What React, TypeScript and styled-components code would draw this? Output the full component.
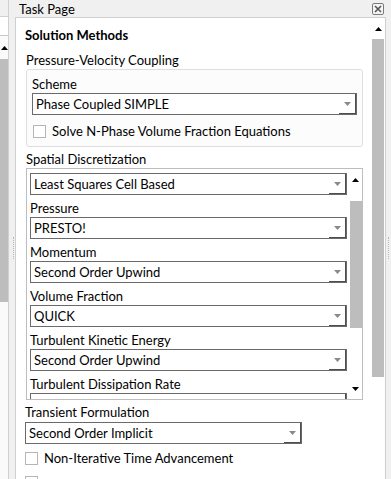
import React from "react";
import styled, { createGlobalStyle } from "styled-components";

const GlobalStyle = createGlobalStyle`
  html, body { margin: 0; padding: 0; background: #f0f0f0; }
  body { font-family: Lato, "Liberation Sans", sans-serif; font-size: 13px; color: #000; }
  * { box-sizing: border-box; }
`;

const Page = styled.div`
  width: 391px;
  height: 479px;
  display: flex;
  overflow: hidden;
  background: #f0f0f0;
`;

/* ---------- left, partially visible panel ---------- */
const LeftStrip = styled.div`
  width: 9px;
  padding-top: 16px;
  display: flex;
  flex-direction: column;
  border-right: 1px solid #d0d0d0;
`;
const LeftHeader = styled.div`
  height: 20px;
  background: #fff;
  border-top: 1px solid #d0d0d0;
  border-bottom: 1px solid #c8c8c8;
`;
const LeftTrack = styled.div`
  flex: 1;
  display: flex;
  flex-direction: column;
  background: #fafafa;
`;

/* ---------- splitters ---------- */
const Splitter = styled.div<{ $w: number; $pad: number }>`
  width: ${(p) => p.$w}px;
  padding-left: ${(p) => p.$pad}px;
  padding-top: 16px;
  display: flex;
  align-items: center;
`;
const Grip = styled.div`
  width: 1px;
  height: 22px;
  border-left: 1px dotted #b8b8b8;
`;

/* ---------- main task page ---------- */
const Main = styled.div`
  width: 371px;
  display: flex;
  flex-direction: column;
`;
const TitleBar = styled.div`
  height: 17px;
  display: flex;
  align-items: center;
  justify-content: space-between;
  padding: 0 2px 0 4px;
  line-height: 16px;
  flex: none;
`;
const Panel = styled.div`
  flex: 1;
  display: flex;
  background: #fff;
  border: 1px solid #cfcfcf;
  border-bottom: none;
  min-height: 0;
  overflow: hidden;
`;
const Content = styled.div`
  flex: 1;
  padding: 8px 9px 0 9px;
  display: flex;
  flex-direction: column;
  min-width: 0;
  & > * { flex: none; }
`;
const Heading = styled.div`
  font-weight: bold;
  line-height: 18px;
`;
const Label = styled.div<{ $mt?: number; $ml?: number }>`
  line-height: 18px;
  margin-top: ${(p) => p.$mt ?? 0}px;
  margin-left: ${(p) => p.$ml ?? 0}px;
  white-space: nowrap;
`;
const Group = styled.div`
  margin-left: 1px;
  width: 337px;
  border: 1px solid #dedede;
  border-radius: 3px;
  background: #fcfcfc;
  padding: 5px 5px 6px 5px;
`;

/* ---------- combo box ---------- */
const ComboBox = styled.div<{ $w?: number; $mt?: number }>`
  height: 22px;
  width: ${(p) => (p.$w ? `${p.$w}px` : "auto")};
  margin-top: ${(p) => p.$mt ?? 0}px;
  display: flex;
  background: #fff;
  border: 1px solid #6a6a6a;
`;
const ComboValue = styled.div`
  flex: 1;
  padding-left: 3px;
  line-height: 20px;
  white-space: nowrap;
  overflow: hidden;
`;
const ComboButton = styled.div`
  width: 17px;
  display: flex;
  align-items: center;
  justify-content: center;
  box-shadow: inset -1px -1px 0 #4e4e4e;
`;

/* ---------- check box ---------- */
const CheckRow = styled.div<{ $mt: number; $ml: number; $gap: number }>`
  display: flex;
  align-items: center;
  height: 18px;
  margin-top: ${(p) => p.$mt}px;
  margin-left: ${(p) => p.$ml}px;
  gap: ${(p) => p.$gap}px;
  white-space: nowrap;
`;
const CheckBox = styled.div`
  width: 13px;
  height: 13px;
  border: 1px solid #b5b5b5;
  background: #fff;
  flex: none;
`;

/* ---------- scrolled list box ---------- */
const ScrollBox = styled.div`
  margin-left: 1px;
  width: 337px;
  height: 232px;
  border: 1px solid #bdbdbd;
  display: flex;
  overflow: hidden;
`;
const ListArea = styled.div`
  flex: 1;
  padding: 4px 2px 0 3px;
  overflow: hidden;
  min-width: 0;
`;
const ListLabel = styled.div`
  padding-top: 4px;
  line-height: 18px;
  white-space: nowrap;
`;

/* ---------- scroll bars ---------- */
const VScroll = styled.div<{ $w: number; $mr?: number }>`
  width: ${(p) => p.$w}px;
  margin-right: ${(p) => p.$mr ?? 0}px;
  display: flex;
  flex-direction: column;
  background: #fff;
  flex: none;
`;
const ArrowBtn = styled.div<{ $h: number }>`
  height: ${(p) => p.$h}px;
  display: flex;
  align-items: center;
  justify-content: center;
  flex: none;
`;
const Track = styled.div<{ $pt?: number }>`
  flex: 1;
  padding-top: ${(p) => p.$pt ?? 0}px;
  min-height: 0;
`;
const Thumb = styled.div<{ $h: number; $ml?: number }>`
  height: ${(p) => p.$h}px;
  margin-left: ${(p) => p.$ml ?? 0}px;
  background: #bdbdbd;
  flex: none;
`;

const Tri = ({ down, color = "#000" }: { down?: boolean; color?: string }) => (
  <svg width="7" height="4" viewBox="0 0 7 4" style={{ display: "block" }}>
    <polygon points={down ? "0,0 7,0 3.5,4" : "0,4 7,4 3.5,0"} fill={color} />
  </svg>
);

const CloseIcon = () => (
  <svg width="12" height="12" viewBox="0 0 12 12" style={{ display: "block" }}>
    <rect x="0.5" y="0.5" width="11" height="11" rx="1.5" fill="#f4f4f4" stroke="#7a7a7a" />
    <path d="M3 3 L9 9 M9 3 L3 9" stroke="#555" strokeWidth="1.6" />
  </svg>
);

const Combo = ({ value, w, mt }: { value: string; w?: number; mt?: number }) => (
  <ComboBox $w={w} $mt={mt}>
    <ComboValue>{value}</ComboValue>
    <ComboButton>
      <Tri down color="#8a8a8a" />
    </ComboButton>
  </ComboBox>
);

const spatial: [string, string][] = [
  ["Pressure", "PRESTO!"],
  ["Momentum", "Second Order Upwind"],
  ["Volume Fraction", "QUICK"],
  ["Turbulent Kinetic Energy", "Second Order Upwind"],
  ["Turbulent Dissipation Rate", ""],
];

export default function App() {
  return (
    <Page>
      <GlobalStyle />
      <LeftStrip>
        <LeftHeader />
        <LeftTrack>
          <ArrowBtn $h={23}>
            <Tri />
          </ArrowBtn>
          <Thumb $h={243} />
        </LeftTrack>
      </LeftStrip>
      <Splitter $w={6} $pad={4}>
        <Grip />
      </Splitter>
      <Main>
        <TitleBar>
          <span>Task Page</span>
          <CloseIcon />
        </TitleBar>
        <Panel>
          <Content>
            <Heading>Solution Methods</Heading>
            <Label $mt={7} $ml={1}>Pressure-Velocity Coupling</Label>
            <Group>
              <Label>Scheme</Label>
              <Combo value="Phase Coupled SIMPLE" />
              <CheckRow $mt={7} $ml={1} $gap={6}>
                <CheckBox />
                <span>Solve N-Phase Volume Fraction Equations</span>
              </CheckRow>
            </Group>
            <Label $mt={3} $ml={1}>Spatial Discretization</Label>
            <ScrollBox>
              <ListArea>
                <Combo value="Least Squares Cell Based" />
                {spatial.map(([l, v]) => (
                  <React.Fragment key={l}>
                    <ListLabel>{l}</ListLabel>
                    <Combo value={v} />
                  </React.Fragment>
                ))}
              </ListArea>
              <VScroll $w={13}>
                <ArrowBtn $h={21}>
                  <Tri />
                </ArrowBtn>
                <Track $pt={11}>
                  <Thumb $h={127} $ml={1} />
                </Track>
                <ArrowBtn $h={20}>
                  <Tri down />
                </ArrowBtn>
              </VScroll>
            </ScrollBox>
            <Label $mt={3}>Transient Formulation</Label>
            <Combo value="Second Order Implicit" w={277} mt={1} />
            <CheckRow $mt={5} $ml={0} $gap={6}>
              <CheckBox />
              <span>Non-Iterative Time Advancement</span>
            </CheckRow>
            <CheckRow $mt={6} $ml={0} $gap={6}>
              <CheckBox />
            </CheckRow>
          </Content>
          <VScroll $w={12} $mr={1}>
            <ArrowBtn $h={21}>
              <Tri />
            </ArrowBtn>
            <Thumb $h={338} />
          </VScroll>
        </Panel>
      </Main>
      <Splitter $w={5} $pad={2}>
        <Grip />
      </Splitter>
    </Page>
  );
}
